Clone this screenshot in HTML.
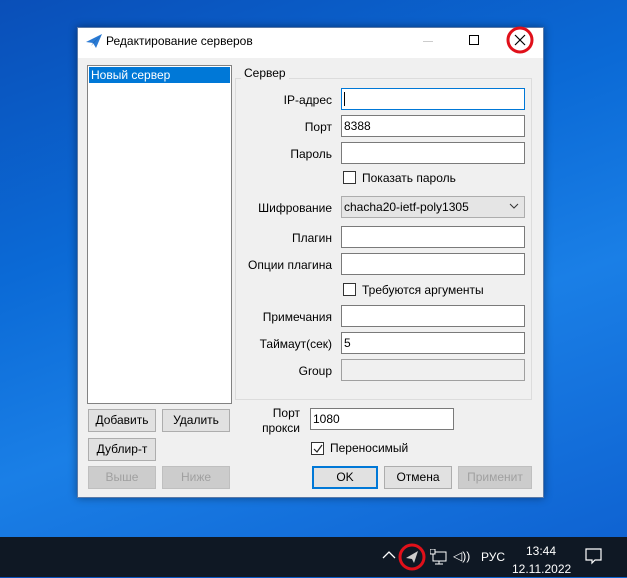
<!DOCTYPE html>
<html><head><meta charset="utf-8"><style>
*{box-sizing:border-box;margin:0;padding:0}
body{width:627px;height:577px;overflow:hidden;position:relative;font-family:"Liberation Sans","DejaVu Sans",sans-serif;font-size:12px;color:#000;
background:linear-gradient(160deg,#0a4fb8 0%,#0b6ad6 35%,#1a7fe6 60%,#0d5fcf 100%)}
.a{position:absolute}
.win{left:77px;top:27px;width:467px;height:471px;background:#f0f0f0;border:1px solid #5a7aa8;box-shadow:0 0 8px rgba(0,0,0,.4)}
.tb{left:0;top:0;width:465px;height:30px;background:#fff}
.in{position:absolute;height:22px;background:#fff;border:1px solid #7a7a7a;padding:3px 2px;font-size:12px}
.lb{position:absolute;right:calc(627px - 332px);text-align:right;font-size:12px}
.btn{position:absolute;height:23px;background:#e1e1e1;border:1px solid #adadad;text-align:center;line-height:21px;font-size:12px}
.dis{color:#a0a0a0;background:#ccc;border-color:#bfbfbf}
.cb{position:absolute;width:13px;height:13px;border:1px solid #333;background:#fff}
</style></head><body>
<div class="a win">
 <div class="a tb"></div>
</div>
<svg class="a" style="left:85px;top:33px" width="18" height="16" viewBox="0 0 18 16"><path d="M1 9 L17 1 L11 15 L8 10 Z" fill="#2a7ad4"/><path d="M8 10 L17 1 L6 13Z" fill="#175ea8"/></svg>
<div class="a" style="left:106px;top:34px;font-size:12px">Редактирование серверов</div>
<div class="a" style="left:423px;top:41px;width:10px;height:1px;background:#ccc"></div>
<div class="a" style="left:469px;top:35px;width:10px;height:10px;border:1px solid #000"></div>
<svg class="a" style="left:505px;top:26px" width="30" height="30"><circle cx="15" cy="14" r="12" fill="none" stroke="#e0101a" stroke-width="3"/><path d="M10 9 L20 19 M20 9 L10 19" stroke="#000" stroke-width="1.2"/></svg>

<div class="a" style="left:87px;top:65px;width:145px;height:339px;background:#fff;border:1px solid #828282"></div>
<div class="a" style="left:89px;top:67px;width:141px;height:16px;background:#0078d7;color:#fff;padding:1px 2px">Новый сервер</div>

<div class="a" style="left:235px;top:78px;width:297px;height:322px;border:1px solid #dcdcdc"></div>
<div class="a" style="left:241px;top:66px;background:#f0f0f0;padding:0 3px">Сервер</div>

<div class="lb" style="top:93px">IP-адрес</div>
<div class="in" style="left:341px;top:88px;width:184px;border-color:#0078d7"><span style="display:inline-block;width:1px;height:14px;background:#000"></span></div>
<div class="lb" style="top:120px">Порт</div>
<div class="in" style="left:341px;top:115px;width:184px">8388</div>
<div class="lb" style="top:147px">Пароль</div>
<div class="in" style="left:341px;top:142px;width:184px"></div>
<div class="cb" style="left:343px;top:171px"></div>
<div class="a" style="left:362px;top:171px">Показать пароль</div>
<div class="lb" style="top:201px">Шифрование</div>
<div class="in" style="left:341px;top:196px;width:184px;background:#e5e5e5;border-color:#adadad">chacha20-ietf-poly1305</div>
<svg class="a" style="left:509px;top:203px" width="10" height="6"><path d="M1 1 L5 5 L9 1" fill="none" stroke="#333"/></svg>
<div class="lb" style="top:231px">Плагин</div>
<div class="in" style="left:341px;top:226px;width:184px"></div>
<div class="lb" style="top:258px">Опции плагина</div>
<div class="in" style="left:341px;top:253px;width:184px"></div>
<div class="cb" style="left:343px;top:283px"></div>
<div class="a" style="left:362px;top:283px">Требуются аргументы</div>
<div class="lb" style="top:310px">Примечания</div>
<div class="in" style="left:341px;top:305px;width:184px"></div>
<div class="lb" style="top:337px">Таймаут(сек)</div>
<div class="in" style="left:341px;top:332px;width:184px">5</div>
<div class="lb" style="top:364px">Group</div>
<div class="in" style="left:341px;top:359px;width:184px;background:#f0f0f0;border-color:#a0a0a0"></div>

<div class="btn" style="left:88px;top:409px;width:68px">Добавить</div>
<div class="btn" style="left:162px;top:409px;width:68px">Удалить</div>
<div class="btn" style="left:88px;top:438px;width:68px">Дублир-т</div>
<div class="btn dis" style="left:88px;top:466px;width:68px">Выше</div>
<div class="btn dis" style="left:162px;top:466px;width:68px">Ниже</div>

<div class="a" style="left:260px;top:406px;width:40px;text-align:right;line-height:15px">Порт<br>прокси</div>
<div class="in" style="left:310px;top:408px;width:144px">1080</div>
<div class="cb" style="left:311px;top:442px"></div>
<svg class="a" style="left:312px;top:443px" width="12" height="12"><path d="M2 6 L5 9 L10 2" fill="none" stroke="#222" stroke-width="1.2"/></svg>
<div class="a" style="left:330px;top:441px">Переносимый</div>

<div class="btn" style="left:312px;top:466px;width:66px;border:2px solid #0078d7;line-height:19px">OK</div>
<div class="btn" style="left:384px;top:466px;width:68px">Отмена</div>
<div class="btn dis" style="left:458px;top:466px;width:74px">Применит</div>

<div class="a" style="left:0;top:537px;width:627px;height:40px;background:#0f1824"></div>
<svg class="a" style="left:380px;top:548px" width="20" height="14"><path d="M3 10 L9 4 L15 10" fill="none" stroke="#fff" stroke-width="1.3"/></svg>
<svg class="a" style="left:398px;top:543px" width="30" height="30"><circle cx="14" cy="14" r="12" fill="none" stroke="#e0101a" stroke-width="3"/><path d="M8 15 L20 8 L16 20 L14 16 Z" fill="#ccc"/></svg>
<svg class="a" style="left:430px;top:549px" width="18" height="16"><rect x="3" y="3" width="13" height="9" fill="none" stroke="#fff"/><rect x="0" y="0" width="5" height="5" fill="#0f1824" stroke="#fff"/><path d="M9 12 V15 M5 15 H13" stroke="#fff"/></svg>
<div class="a" style="left:453px;top:549px;color:#fff;font-size:12px">◁))</div>
<div class="a" style="left:481px;top:550px;color:#fff;font-size:12px">РУС</div>
<div class="a" style="left:512px;top:542px;width:58px;text-align:center;color:#fff;font-size:12px;line-height:18px">13:44<br>12.11.2022</div>
<svg class="a" style="left:584px;top:547px" width="20" height="18"><path d="M2 2 H17 V13 H11 L8 16 V13 H2 Z" fill="none" stroke="#fff" stroke-width="1.2"/></svg>
</body></html>
